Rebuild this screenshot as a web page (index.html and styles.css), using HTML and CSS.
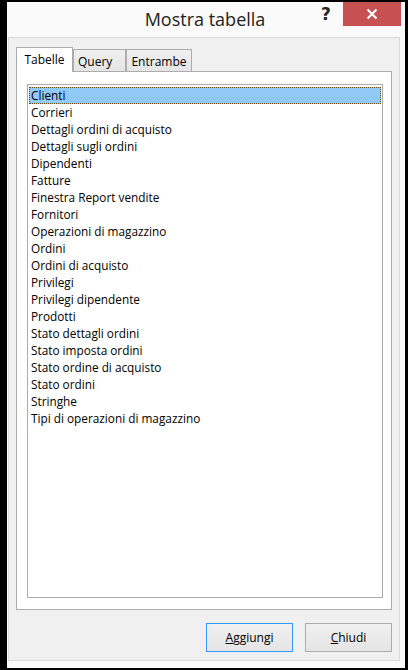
FILE: index.html
```html
<!DOCTYPE html>
<html>
<head>
<meta charset="utf-8">
<link rel="stylesheet" href="styles.css">
</head>
<body>
<div class="window">
  <div class="titlebar">
    <div class="title">Mostra tabella</div>
    <div class="help">?</div>
    <div class="close">
      <svg width="12" height="12" viewBox="0 0 12 12"><path d="M1.5 1.5 L10.5 10.5 M10.5 1.5 L1.5 10.5" stroke="#fff" stroke-width="2.2" fill="none"/></svg>
    </div>
  </div>
  <div class="panel">
    <div class="tabs">
      <div class="tab tab-active">Tabelle</div>
      <div class="tab tab-query">Query</div>
      <div class="tab tab-both">Entrambe</div>
    </div>
    <div class="page">
      <div class="listbox">
        <div class="item selected">Clienti</div>
        <div class="item">Corrieri</div>
        <div class="item">Dettagli ordini di acquisto</div>
        <div class="item">Dettagli sugli ordini</div>
        <div class="item">Dipendenti</div>
        <div class="item">Fatture</div>
        <div class="item">Finestra Report vendite</div>
        <div class="item">Fornitori</div>
        <div class="item">Operazioni di magazzino</div>
        <div class="item">Ordini</div>
        <div class="item">Ordini di acquisto</div>
        <div class="item">Privilegi</div>
        <div class="item">Privilegi dipendente</div>
        <div class="item">Prodotti</div>
        <div class="item">Stato dettagli ordini</div>
        <div class="item">Stato imposta ordini</div>
        <div class="item">Stato ordine di acquisto</div>
        <div class="item">Stato ordini</div>
        <div class="item">Stringhe</div>
        <div class="item">Tipi di operazioni di magazzino</div>
      </div>
    </div>
    <div class="buttons">
      <div class="btn btn-default"><span class="ul">A</span>ggiungi</div>
      <div class="btn"><span class="ul">C</span>hiudi</div>
    </div>
  </div>
</div>
</body>
</html>
```

FILE: styles.css
```css
html, body {
  margin: 0;
  padding: 0;
  background: #000;
  width: 408px;
  height: 670px;
  overflow: hidden;
}
body {
  font-family: "Open Sans", "Noto Sans", sans-serif;
  font-size: 12px;
  color: #000;
}
.window {
  margin: 2px 0 0 7px;
  width: 398px;
  height: 666px;
  box-sizing: border-box;
  padding: 0 5px 7px 1px;
  background: #fafafa;
  display: flex;
  flex-direction: column;
}
.titlebar {
  height: 35px;
  position: relative;
  flex: none;
}
.title {
  position: absolute;
  left: 0;
  right: 0;
  top: 5px;
  text-align: center;
  font-size: 18px;
  line-height: 24px;
  color: #222;
  padding-left: 2px;
}
.help {
  position: absolute;
  left: 313px;
  top: 1px;
  font-family: "DejaVu Sans", sans-serif;
  font-weight: bold;
  font-size: 17px;
  line-height: 22px;
  color: #222;
}
.close {
  position: absolute;
  left: 335px;
  top: 0;
  width: 58px;
  height: 24px;
  background: #c75050;
  display: flex;
  align-items: center;
  justify-content: center;
}
.panel {
  height: 624px;
  box-sizing: border-box;
  border: 1px solid #dadada;
  background: #f0f0f0;
  padding: 9px 7px 8px 7px;
  display: flex;
  flex-direction: column;
}
.tabs {
  display: flex;
  align-items: flex-end;
  height: 25px;
  margin-bottom: -1px;
  position: relative;
  z-index: 1;
  flex: none;
}
.tab {
  box-sizing: border-box;
  height: 23px;
  border: 1px solid #acacac;
  background: linear-gradient(#f0f0f0, #e5e5e5);
  line-height: 20px;
  padding-top: 2px;
  text-align: center;
}
.tab-active {
  width: 57px;
  height: 25px;
  background: #fff;
  border-bottom: none;
  padding-top: 2px;
}
.tab-query {
  width: 53px;
  text-align: left;
  padding-left: 4px;
}
.tab-both {
  width: 66px;
}
.page {
  height: 539px;
  box-sizing: border-box;
  border: 1px solid #acacac;
  background: #fff;
  padding: 12px 8px 11px 10px;
  flex: none;
}
.listbox {
  height: 100%;
  box-sizing: border-box;
  border: 1px solid #acacac;
  padding: 2px 1px 1px 1px;
}
.item {
  height: 17px;
  line-height: 17px;
  padding-left: 2px;
  white-space: nowrap;
  font-size: 11.8px;
}
.selected {
  background: #91c9f7;
  outline: 1px dotted #6b4a1a;
  outline-offset: -1px;
}
.buttons {
  margin-top: 13px;
  display: flex;
  justify-content: flex-end;
  gap: 12px;
  flex: none;
}
.btn {
  width: 87px;
  height: 29px;
  box-sizing: border-box;
  border: 1px solid #acacac;
  background: linear-gradient(#f0f0f0, #e5e5e5);
  display: flex;
  align-items: center;
  justify-content: center;
}
.btn-default {
  border-color: #3399ff;
}
.ul {
  text-decoration: underline;
}
```
